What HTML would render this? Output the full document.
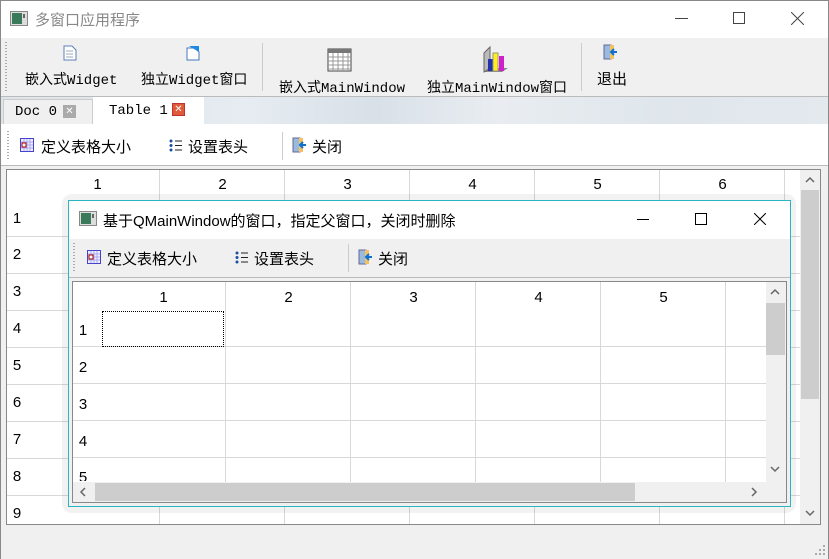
<!DOCTYPE html>
<html><head><meta charset="utf-8"><style>
*{margin:0;padding:0;box-sizing:border-box}
body{width:829px;height:559px;overflow:hidden;background:#f0f0f0;font-family:"Liberation Sans","Noto Sans CJK SC",sans-serif;font-size:14px;color:#000;position:relative}
.a{position:absolute;white-space:nowrap}
.mono{font-family:"Liberation Mono","WenQuanYi Zen Hei",monospace;font-size:14px}
.num{position:absolute;font-size:15px;text-align:center}
.grip{position:absolute;width:2px;background:repeating-linear-gradient(#aaa 0 1px,transparent 1px 3px)}
.sep{position:absolute;width:1px;background:#ccc}
</style></head><body>
<div class="a" style="left:0;top:0;width:829px;height:559px;border:1px solid #888;border-bottom:none"></div>
<div class="a" style="left:1px;top:1px;width:827px;height:37px;background:#fff"></div>
<svg class="a" style="left:10px;top:11px" width="18" height="15"><rect x="0.5" y="0.5" width="17" height="14" fill="#ddd" stroke="#888"/><rect x="2" y="2" width="10" height="11" fill="#3a7a5a"/><rect x="13" y="3" width="2" height="4" fill="#666"/></svg>
<div class="a" style="left:35px;top:9px;color:#888;font-size:15px">多窗口应用程序</div>
<div class="a" style="left:675px;top:18px;width:13px;height:1px;background:#444"></div>
<div class="a" style="left:733px;top:12px;width:12px;height:12px;border:1px solid #444"></div>
<svg class="a" style="left:791px;top:12px" width="13" height="13"><path d="M0 0L13 13M13 0L0 13" stroke="#444"/></svg>
<div class="grip" style="left:5px;top:42px;height:50px"></div>
<svg class="a" style="left:63px;top:45px" width="14" height="16"><path d="M1 1h8l4 4v10H1z" fill="#fff" stroke="#5b7fb8"/><path d="M3 6h7M3 9h7M3 12h7" stroke="#9ab"/></svg>
<div class="a mono" style="left:25px;top:69px">嵌入式Widget</div>
<svg class="a" style="left:185px;top:45px" width="16" height="16"><path d="M2 3h8l4 4v8H2z" fill="#fff" stroke="#4478c0"/><path d="M4 1h10v6z" fill="#1e88e5"/></svg>
<div class="a mono" style="left:141px;top:69px">独立Widget窗口</div>
<div class="sep" style="left:262px;top:43px;height:48px"></div>
<svg class="a" style="left:327px;top:48px" width="26" height="24"><rect x="1" y="1" width="23" height="22" fill="#fff" stroke="#444"/><rect x="1" y="1" width="23" height="4" fill="#777"/><path d="M6 5v18M11 5v18M16 5v18M21 5v18M1 9h23M1 13h23M1 17h23M1 21h23" stroke="#999"/></svg>
<div class="a mono" style="left:279px;top:77px">嵌入式MainWindow</div>
<svg class="a" style="left:480px;top:45px" width="30" height="30"><path d="M4 27l6-4h18l-6 4z" fill="#888"/><path d="M4 27V8l6-6v21z" fill="#bbb" stroke="#666"/><rect x="8" y="14" width="5" height="12" fill="#2233aa"/><rect x="13" y="8" width="5" height="18" fill="#ffee22" stroke="#997"/><rect x="19" y="11" width="5" height="15" fill="#cc22cc"/></svg>
<div class="a mono" style="left:427px;top:77px">独立MainWindow窗口</div>
<div class="sep" style="left:581px;top:43px;height:48px"></div>
<svg class="a" style="left:602px;top:44px" width="16" height="16"><rect x="2" y="1" width="7" height="14" fill="#9bd" stroke="#669"/><path d="M8 1h4v14H8" fill="#f5c060"/><path d="M15 8H10M12 5l-3 3 3 3" stroke="#1070d0" stroke-width="2" fill="none"/></svg>
<div class="a" style="left:597px;top:68px;font-size:15px">退出</div>
<div class="a" style="left:1px;top:96px;width:827px;height:28px;background:linear-gradient(90deg,#dde4ea 0,#e6ecf1 30%,#d8e0e8 45%,#e9edf1 60%,#dfe6ec 80%,#e4e9ee 100%);border-top:1px solid #bbb"></div>
<div class="a" style="left:3px;top:99px;width:90px;height:25px;background:#f0f0f0;border:1px solid #ccc;border-bottom:none"></div>
<div class="a mono" style="left:15px;top:104px">Doc 0</div>
<div class="a" style="left:63px;top:105px;width:13px;height:13px;background:#aaa;color:#fff;font-size:10px;line-height:13px;text-align:center">✕</div>
<div class="a" style="left:93px;top:97px;width:111px;height:28px;background:#fff"></div>
<div class="a mono" style="left:109px;top:103px">Table 1</div>
<div class="a" style="left:172px;top:103px;width:13px;height:13px;background:#e05a3a;color:#fff;font-size:10px;line-height:12px;text-align:center;border:1px solid #b33">✕</div>
<div class="a" style="left:1px;top:124px;width:827px;height:42px;background:#fff"></div>
<div class="grip" style="left:7px;top:131px;height:28px"></div>
<svg class="a" style="left:20px;top:138px" width="14" height="14"><rect x="0.5" y="0.5" width="13" height="13" fill="#eef" stroke="#44c"/><path d="M4 1v12M7 1v12M10 1v12M1 4h12M1 7h12M1 10h12" stroke="#aae"/><rect x="2" y="5" width="4" height="4" fill="#fff" stroke="#a00"/></svg>
<div class="a" style="left:41px;top:136px;font-size:15px">定义表格大小</div>
<svg class="a" style="left:169px;top:139px" width="14" height="13"><circle cx="2" cy="2" r="1.5" fill="#1a4fa0"/><circle cx="2" cy="6.5" r="1.5" fill="#1a4fa0"/><circle cx="2" cy="11" r="1.5" fill="#1a4fa0"/><path d="M6 2h7M6 6.5h7M6 11h7" stroke="#222"/></svg>
<div class="a" style="left:188px;top:136px;font-size:15px">设置表头</div>
<div class="sep" style="left:282px;top:132px;height:28px"></div>
<svg class="a" style="left:291px;top:137px" width="16" height="16"><rect x="2" y="1" width="7" height="14" fill="#9bd" stroke="#669"/><path d="M8 1h4v14H8" fill="#f5c060"/><path d="M15 8H10M12 5l-3 3 3 3" stroke="#1070d0" stroke-width="2" fill="none"/></svg>
<div class="a" style="left:312px;top:136px;font-size:15px">关闭</div>
<div class="a" style="left:1px;top:165px;width:827px;height:1px;background:#bbb"></div>
<div class="a" style="left:6px;top:169px;width:815px;height:356px;border:1px solid #888;background:#fff"></div>
<div class="a" style="left:35px;top:170px;width:765px;height:354px;background:repeating-linear-gradient(90deg,transparent 0 124px,#d8d8d8 124px 125px)"></div>
<div class="a" style="left:7px;top:200px;width:793px;height:324px;background:repeating-linear-gradient(180deg,transparent 0 36px,#d8d8d8 36px 37px)"></div>
<div class="a" style="left:7px;top:170px;width:28px;height:30px;background:#fff"></div>
<div class="num" style="left:35px;top:176px;width:125px">1</div>
<div class="num" style="left:160px;top:176px;width:125px">2</div>
<div class="num" style="left:285px;top:176px;width:125px">3</div>
<div class="num" style="left:410px;top:176px;width:125px">4</div>
<div class="num" style="left:535px;top:176px;width:125px">5</div>
<div class="num" style="left:660px;top:176px;width:125px">6</div>
<div class="num" style="left:7px;top:210px;width:20px">1</div>
<div class="num" style="left:7px;top:246px;width:20px">2</div>
<div class="num" style="left:7px;top:283px;width:20px">3</div>
<div class="num" style="left:7px;top:320px;width:20px">4</div>
<div class="num" style="left:7px;top:357px;width:20px">5</div>
<div class="num" style="left:7px;top:394px;width:20px">6</div>
<div class="num" style="left:7px;top:431px;width:20px">7</div>
<div class="num" style="left:7px;top:468px;width:20px">8</div>
<div class="num" style="left:7px;top:505px;width:20px">9</div>
<div class="a" style="left:800px;top:170px;width:20px;height:354px;background:#f0f0f0"></div>
<div class="a" style="left:801px;top:190px;width:18px;height:209px;background:#cdcdcd"></div>
<svg class="a" style="left:805px;top:176px" width="10" height="7"><path d="M1 6l4-4 4 4" stroke="#666" stroke-width="1.5" fill="none"/></svg>
<svg class="a" style="left:805px;top:510px" width="10" height="7"><path d="M1 1l4 4 4-4" stroke="#666" stroke-width="1.5" fill="none"/></svg>
<svg class="a" style="left:815px;top:545px" width="12" height="12"><g fill="#aaa"><rect x="8" y="0" width="2" height="2"/><rect x="4" y="4" width="2" height="2"/><rect x="8" y="4" width="2" height="2"/><rect x="0" y="8" width="2" height="2"/><rect x="4" y="8" width="2" height="2"/><rect x="8" y="8" width="2" height="2"/></g></svg>
<div class="a" style="left:62px;top:194px;width:734px;height:319px;background:rgba(0,0,0,0.05);border-radius:10px"></div>
<div class="a" style="left:68px;top:200px;width:723px;height:307px;border:1px solid #2ab5c2;background:#f0f0f0"></div>
<div class="a" style="left:69px;top:201px;width:721px;height:38px;background:#fff"></div>
<svg class="a" style="left:79px;top:211px" width="18" height="15"><rect x="0.5" y="0.5" width="17" height="14" fill="#ddd" stroke="#888"/><rect x="2" y="2" width="10" height="11" fill="#3a7a5a"/><rect x="13" y="3" width="2" height="4" fill="#666"/></svg>
<div class="a" style="left:103px;top:210px;font-size:15px">基于QMainWindow的窗口，指定父窗口，关闭时删除</div>
<div class="a" style="left:637px;top:219px;width:12px;height:1px;background:#000"></div>
<div class="a" style="left:695px;top:213px;width:12px;height:12px;border:1px solid #000"></div>
<svg class="a" style="left:754px;top:213px" width="12" height="12"><path d="M0 0L12 12M12 0L0 12" stroke="#000"/></svg>
<div class="grip" style="left:73px;top:243px;height:30px"></div>
<svg class="a" style="left:87px;top:250px" width="14" height="14"><rect x="0.5" y="0.5" width="13" height="13" fill="#eef" stroke="#44c"/><path d="M4 1v12M7 1v12M10 1v12M1 4h12M1 7h12M1 10h12" stroke="#aae"/><rect x="2" y="5" width="4" height="4" fill="#fff" stroke="#a00"/></svg>
<div class="a" style="left:107px;top:248px;font-size:15px">定义表格大小</div>
<svg class="a" style="left:235px;top:251px" width="14" height="13"><circle cx="2" cy="2" r="1.5" fill="#1a4fa0"/><circle cx="2" cy="6.5" r="1.5" fill="#1a4fa0"/><circle cx="2" cy="11" r="1.5" fill="#1a4fa0"/><path d="M6 2h7M6 6.5h7M6 11h7" stroke="#222"/></svg>
<div class="a" style="left:254px;top:248px;font-size:15px">设置表头</div>
<div class="sep" style="left:348px;top:244px;height:28px"></div>
<svg class="a" style="left:357px;top:249px" width="16" height="16"><rect x="2" y="1" width="7" height="14" fill="#9bd" stroke="#669"/><path d="M8 1h4v14H8" fill="#f5c060"/><path d="M15 8H10M12 5l-3 3 3 3" stroke="#1070d0" stroke-width="2" fill="none"/></svg>
<div class="a" style="left:378px;top:248px;font-size:15px">关闭</div>
<div class="a" style="left:69px;top:277px;width:721px;height:1px;background:#bbb"></div>
<div class="a" style="left:72px;top:281px;width:715px;height:222px;border:1px solid #888;background:#fff"></div>
<div class="a" style="left:101px;top:282px;width:665px;height:200px;background:repeating-linear-gradient(90deg,transparent 0 124px,#d8d8d8 124px 125px)"></div>
<div class="a" style="left:73px;top:310px;width:693px;height:172px;background:repeating-linear-gradient(180deg,transparent 0 36px,#d8d8d8 36px 37px)"></div>
<div class="a" style="left:73px;top:282px;width:28px;height:28px;background:#fff"></div>
<div class="num" style="left:101px;top:289px;width:125px">1</div>
<div class="num" style="left:226px;top:289px;width:125px">2</div>
<div class="num" style="left:351px;top:289px;width:125px">3</div>
<div class="num" style="left:476px;top:289px;width:125px">4</div>
<div class="num" style="left:601px;top:289px;width:125px">5</div>
<div class="num" style="left:73px;top:322px;width:20px">1</div>
<div class="num" style="left:73px;top:359px;width:20px">2</div>
<div class="num" style="left:73px;top:396px;width:20px">3</div>
<div class="num" style="left:73px;top:433px;width:20px">4</div>
<div class="num" style="left:73px;top:469px;width:20px;height:12px;overflow:hidden">5</div>
<div class="a" style="left:102px;top:311px;width:122px;height:36px;border:1px dotted #000"></div>
<div class="a" style="left:766px;top:282px;width:20px;height:220px;background:#f0f0f0"></div>
<div class="a" style="left:766px;top:303px;width:19px;height:52px;background:#cdcdcd"></div>
<svg class="a" style="left:770px;top:288px" width="10" height="7"><path d="M1 6l4-4 4 4" stroke="#666" stroke-width="1.5" fill="none"/></svg>
<svg class="a" style="left:770px;top:466px" width="10" height="7"><path d="M1 1l4 4 4-4" stroke="#666" stroke-width="1.5" fill="none"/></svg>
<div class="a" style="left:73px;top:482px;width:693px;height:20px;background:#f0f0f0"></div>
<div class="a" style="left:95px;top:483px;width:540px;height:18px;background:#cdcdcd"></div>
<svg class="a" style="left:79px;top:487px" width="7" height="10"><path d="M6 1L2 5l4 4" stroke="#666" stroke-width="1.5" fill="none"/></svg>
<svg class="a" style="left:751px;top:487px" width="7" height="10"><path d="M1 1l4 4-4 4" stroke="#666" stroke-width="1.5" fill="none"/></svg>
</body></html>
